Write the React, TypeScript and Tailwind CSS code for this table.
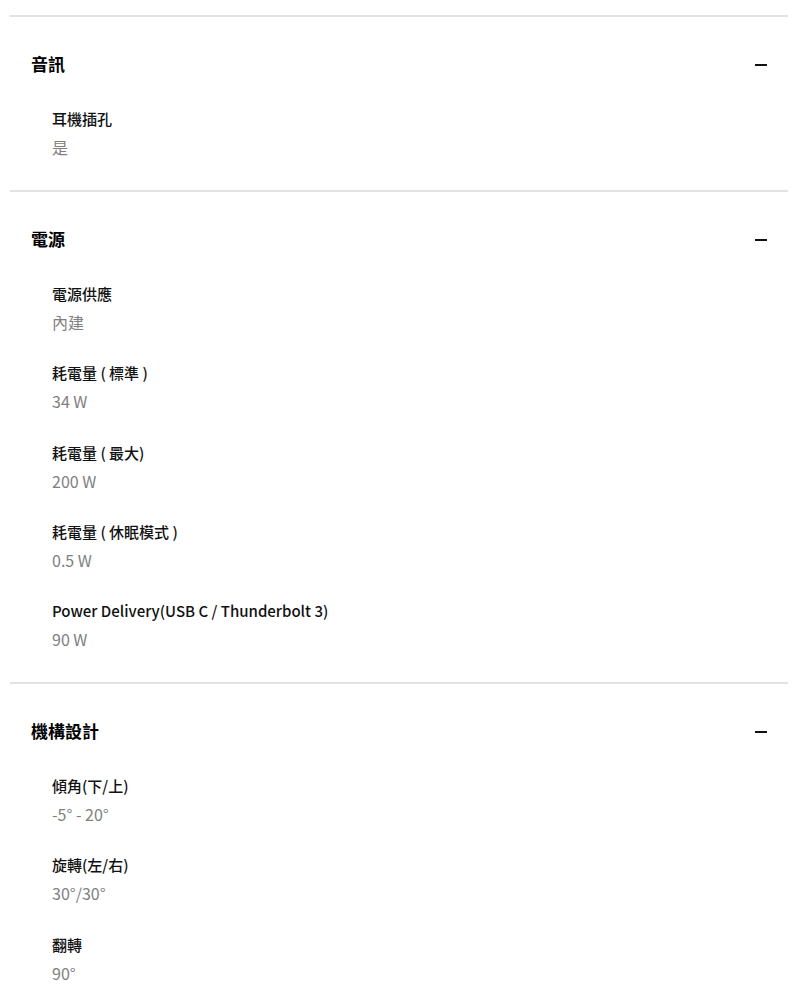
const sections = [
  {
    title: "音訊",
    items: [{ label: "耳機插孔", value: "是" }],
  },
  {
    title: "電源",
    items: [
      { label: "電源供應", value: "內建" },
      { label: "耗電量 ( 標準 )", value: "34 W" },
      { label: "耗電量 ( 最大)", value: "200 W" },
      { label: "耗電量 ( 休眠模式 )", value: "0.5 W" },
      { label: "Power Delivery(USB C / Thunderbolt 3)", value: "90 W" },
    ],
  },
  {
    title: "機構設計",
    items: [
      { label: "傾角(下/上)", value: "-5° - 20°" },
      { label: "旋轉(左/右)", value: "30°/30°" },
      { label: "翻轉", value: "90°" },
    ],
  },
];

const SpecSection = ({ title, items }: { title: string; items: { label: string; value: string }[] }) => (
  <section className="border-t-2 border-[#e2e2e2] pt-[33px] pb-[29px]">
    <div className="flex items-center justify-between pl-[21px] pr-[21px]">
      <h3 className="text-[17px] leading-[28px] font-bold text-black">{title}</h3>
      <span className="block w-[12px] h-[2px] bg-[#111] mt-[2px]" />
    </div>
    <div className="mt-[27px] pl-[42px] flex flex-col gap-[23.3px]">
      {items.map((it) => (
        <div key={it.label}>
          <div className="text-[15px] leading-[28px] font-medium text-[#111]">{it.label}</div>
          <div className="text-[16px] leading-[28px] text-[#808080]">{it.value}</div>
        </div>
      ))}
    </div>
  </section>
);

export default function App() {
  return (
    <div
      className="min-h-[995px] bg-white pt-[15px] px-[10px] pr-[12px]"
      style={{ fontFamily: '"Noto Sans CJK TC", "Noto Sans", sans-serif' }}
    >
      {sections.map((s) => (
        <SpecSection key={s.title} {...s} />
      ))}
    </div>
  );
}
